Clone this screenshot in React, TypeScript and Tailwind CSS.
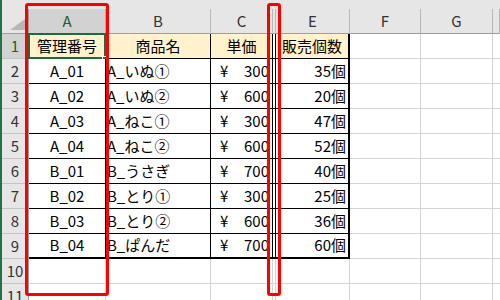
import React from 'react';

const colLetters = ['', 'A', 'B', 'C', 'D', 'E', 'F', 'G', ''];

const data = [
  ['A_01', 'A_いぬ①', '300', '35個'],
  ['A_02', 'A_いぬ②', '600', '20個'],
  ['A_03', 'A_ねこ①', '300', '47個'],
  ['A_04', 'A_ねこ②', '600', '52個'],
  ['B_01', 'B_うさぎ', '700', '40個'],
  ['B_02', 'B_とり①', '300', '25個'],
  ['B_03', 'B_とり②', '600', '36個'],
  ['B_04', 'B_ぱんだ', '700', '60個'],
];

const font = { fontFamily: '"Noto Sans CJK JP", "Noto Sans", sans-serif' };

const HeaderRow = () => (
  <>
    <div className="relative bg-[#e6e6e6] border-r border-b border-[#9e9e9e] h-[25px]">
      <svg className="absolute right-[3px] bottom-[3px]" width="15" height="11" viewBox="0 0 15 11">
        <polygon points="15,0 15,11 0,11" fill="#b6b6b6" />
      </svg>
    </div>
    {colLetters.slice(1).map((c, i) => (
      <div
        key={i}
        className={
          'flex items-center justify-center h-[25px] border-b text-[15px] ' +
          (c === 'A'
            ? 'bg-[#d2d2d2] border-b-[#1e6b41] text-[#1e5a38] border-r border-r-[#ababab]'
            : 'bg-[#e6e6e6] border-b-[#9e9e9e] text-[#333] border-r border-r-[#b8b8b8]')
        }
      >
        {c === 'D' ? '' : c}
      </div>
    ))}
  </>
);

const RowHead = ({ n }: { n: number }) => (
  <div
    className={
      'flex items-center justify-center h-[25px] border-b border-r text-[15px] ' +
      (n === 1
        ? 'bg-[#d2d2d2] border-b-[#c4c4c4] border-r-[#1e6b41] text-[#1e5a38]'
        : 'bg-[#e6e6e6] border-b-[#c4c4c4] border-r-[#9e9e9e] text-[#333]')
    }
  >
    {n}
  </div>
);

const App = () => {
  const rows = [1, 2, 3, 4, 5, 6, 7, 8, 9, 10, 11];
  return (
    <div className="relative w-[500px] h-[300px] overflow-hidden bg-white border-l-2 border-[#217346]" style={font}>
      <div className="h-[9px] bg-[#e6e6e6]" />
      <div className="grid grid-cols-[27px_77px_105px_62px_3px_74px_71px_72px_1fr] text-black">
        <HeaderRow />
        {rows.map((r) => {
          const inTable = r <= 9;
          const last = r === 9;
          const rowData = r >= 2 && r <= 9 ? data[r - 2] : null;
          const bottom = last ? 'border-b-2 border-b-black' : inTable ? 'border-b border-b-black' : 'border-b border-b-[#d4d4d4]';
          const head = r === 1;
          const bg = head ? 'bg-[#fff2cc]' : 'bg-white';
          return (
            <React.Fragment key={r}>
              <RowHead n={r} />
              {/* A */}
              <div className={`relative flex items-center justify-center h-[25px] text-[15px] border-r ${inTable ? 'border-r-black' : 'border-r-[#d4d4d4]'} ${bottom} ${bg}`}>
                {head ? '管理番号' : rowData ? rowData[0] : ''}
                {head && (
                  <>
                    <div className="absolute -inset-[1px] border-2 border-[#1e6b41]" />
                    <div className="absolute right-[-3px] bottom-[-4px] w-[6px] h-[6px] bg-[#1e6b41] border border-white" />
                  </>
                )}
              </div>
              {/* B */}
              <div className={`flex items-center h-[25px] text-[15px] border-r ${inTable ? 'border-r-black' : 'border-r-[#d4d4d4]'} ${bottom} ${bg} ${head ? 'justify-center' : 'pl-[1px]'}`}>
                {head ? '商品名' : rowData ? rowData[1] : ''}
              </div>
              {/* C */}
              <div className={`flex items-center h-[25px] text-[15px] border-r ${inTable ? 'border-r-black' : 'border-r-[#d4d4d4]'} ${bottom} ${bg} ${head ? 'justify-center' : 'justify-between pl-[9px] pr-[3px]'}`}>
                {head ? '単価' : rowData ? (
                  <>
                    <span>¥</span>
                    <span>{rowData[2]}</span>
                  </>
                ) : ''}
              </div>
              {/* D hidden */}
              <div className={`h-[25px] border-r ${inTable ? 'border-r-black' : 'border-r-[#d4d4d4]'} ${bottom} bg-white`} />
              {/* E */}
              <div className={`flex items-center h-[25px] text-[15px] ${inTable ? 'border-r-2 border-r-black' : 'border-r border-r-[#d4d4d4]'} ${bottom} ${bg} ${head ? 'justify-center' : 'justify-end pr-[2px]'}`}>
                {head ? '販売個数' : rowData ? rowData[3] : ''}
              </div>
              <div className="h-[25px] border-r border-b border-[#d4d4d4]" />
              <div className="h-[25px] border-r border-b border-[#d4d4d4]" />
              <div className="h-[25px] border-b border-[#d4d4d4]" />
            </React.Fragment>
          );
        })}
      </div>
      <div className="absolute left-[23px] top-[3px] w-[84px] h-[293px] border-[3px] border-[#ff0000] rounded-[3px]" />
      <div className="absolute left-[265px] top-[3px] w-[14px] h-[293px] border-[3px] border-[#ff0000] rounded-[3px]" />
    </div>
  );
};

export default App;
